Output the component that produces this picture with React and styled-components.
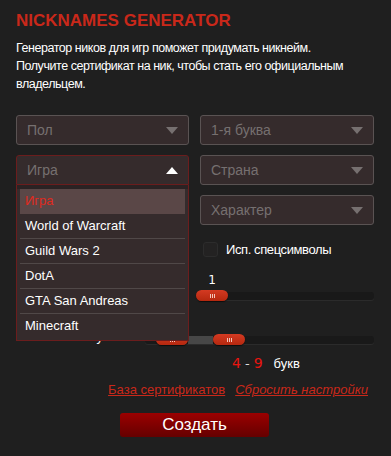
import React from "react";
import styled, { createGlobalStyle, css } from "styled-components";

const GlobalStyle = createGlobalStyle`
    html, body {
        margin: 0;
        padding: 0;
        background: #1f1f1f;
    }
    body {
        font-family: "Liberation Sans", Arial, sans-serif;
        color: #fff;
    }
`;

const Page = styled.div`
    width: 391px;
    height: 456px;
    box-sizing: border-box;
    padding: 11px 17px 0 16px;
    overflow: hidden;
    background: #1f1f1f;
`;
const Title = styled.h1`
    margin: 0;
    font-size: 17px;
    line-height: 20px;
    font-weight: 700;
    color: #c9281a;
`;
const Intro = styled.p`
    margin: 8px 0 0;
    font-size: 12.5px;
    letter-spacing: -0.45px;
    line-height: 18px;
    color: #fff;
`;
const Grid = styled.div`
    display: grid;
    grid-template-columns: 173px 174px;
    column-gap: 11px;
    row-gap: 10px;
    margin-top: 22px;
`;
const SelectWrap = styled.div`
    position: relative;
`;
const SelectBox = styled.div`
    height: 30px;
    box-sizing: border-box;
    display: flex;
    align-items: center;
    justify-content: space-between;
    padding: 0 10px;
    background: #352b2c;
    border: 1px solid ${(p) => (p.$open ? "#6b1d1d" : "#5a5353")};
    border-radius: ${(p) => (p.$open ? "3px 3px 0 0" : "3px")};
    font-size: 14px;
    color: #767070;
`;
const Arrow = styled.span`
    width: 0;
    height: 0;
    border-left: 6px solid transparent;
    border-right: 6px solid transparent;
    ${(p) =>
        p.$up
            ? css`
                  border-bottom: 7px solid #fff;
              `
            : css`
                  border-top: 7px solid #767070;
              `}
`;
const Menu = styled.ul`
    position: absolute;
    z-index: 5;
    left: 0;
    right: 0;
    top: 30px;
    margin: 0;
    padding: 4px 3px 2px;
    list-style: none;
    background: #352b2c;
    border: 1px solid #6b1d1d;
    border-top: none;
    box-shadow: inset 0 4px 0 #2b2223;
`;
const Item = styled.li`
    height: 24px;
    line-height: 24px;
    padding: 0 5px;
    font-size: 13px;
    color: ${(p) => (p.$active ? "#e02a1e" : "#fff")};
    background: ${(p) => (p.$active ? "#5a4747" : "transparent")};
    border-bottom: 1px solid ${(p) => (p.$active ? "transparent" : "#504848")};
    &:last-child {
        border-bottom: none;
    }
`;
const CheckRow = styled.label`
    display: flex;
    align-items: center;
    gap: 8px;
    font-size: 13px;
    letter-spacing: -0.4px;
    color: #fff;
    padding-left: 3px;
`;
const CheckBox = styled.span`
    width: 15px;
    height: 15px;
    box-sizing: border-box;
    border-radius: 3px;
    background: #232222;
    border: 1px solid #2c2c2c;
`;
const Options = styled.div`
    display: grid;
    grid-template-columns: 173px 174px;
    column-gap: 11px;
    margin-top: 17px;
`;
const SliderRow = styled.div`
    display: grid;
    grid-template-columns: ${(p) => p.$label}px 1fr;
    align-items: end;
    margin-top: ${(p) => p.$top}px;
`;
const SliderLabel = styled.span`
    font-size: 13px;
    letter-spacing: -0.3px;
    color: #fff;
    text-align: right;
    padding-right: 27px;
    line-height: 16px;
`;
const Slider = styled.div`
    position: relative;
    height: 11px;
`;
const Track = styled.div`
    position: absolute;
    left: 0;
    right: 0;
    top: 2px;
    height: 8px;
    background: #191919;
    border-radius: 3px;
    box-shadow: 0 1px 0 #2b2b2b;
`;
const Range = styled.div`
    position: absolute;
    top: 2px;
    height: 8px;
    background: #474747;
`;
const Handle = styled.div`
    position: absolute;
    top: 0;
    width: 32px;
    height: 11px;
    border-radius: 6px;
    background: linear-gradient(#d43a22, #b5280f);
    box-shadow: 0 1px 1px rgba(0, 0, 0, 0.6);
    display: flex;
    align-items: center;
    justify-content: center;
    gap: 1px;
    span {
        width: 1px;
        height: 4px;
        background: #f4c8bd;
    }
`;
const Value = styled.span`
    position: absolute;
    bottom: 14px;
    width: 32px;
    text-align: center;
    font-family: "DejaVu Sans", sans-serif;
    font-size: 12px;
    color: #fff;
`;
const Count = styled.div`
    display: flex;
    align-items: baseline;
    margin: 10px 0 0 216px;
    font-family: "DejaVu Sans", sans-serif;
    font-size: 13px;
    color: #ddd;
    b {
        font-weight: 400;
        color: #e8150f;
        font-size: 14px;
    }
    .dash {
        margin: 0 4px;
    }
    .unit {
        margin-left: 11px;
        font-family: "Liberation Sans", Arial, sans-serif;
        font-size: 13px;
        color: #fff;
    }
`;
const Links = styled.div`
    display: flex;
    justify-content: flex-end;
    gap: 10px;
    margin: 11px 6px 0 0;
    font-size: 13px;
`;
const LinkA = styled.a`
    color: #c9281a;
    text-decoration: underline;
    font-style: ${(p) => (p.$italic ? "italic" : "normal")};
`;
const Submit = styled.button`
    display: block;
    width: 149px;
    height: 24px;
    margin: 16px 0 0 104px;
    padding: 0;
    border: none;
    border-radius: 3px;
    background: linear-gradient(#9b0000, #650000);
    color: #fff;
    font-family: "Liberation Sans", Arial, sans-serif;
    font-size: 17px;
    line-height: 24px;
`;

const Select = ({ label }) => (
    <SelectBox>
        {label}
        <Arrow />
    </SelectBox>
);

const Grip = ({ left }) => (
    <Handle style={{ left }}>
        <span />
        <span />
        <span />
    </Handle>
);

const games = ["Игра", "World of Warcraft", "Guild Wars 2", "DotA", "GTA San Andreas", "Minecraft"];

const App = () => {
    return (
        <>
            <GlobalStyle />
            <Page>
                <Title>NICKNAMES GENERATOR</Title>
                <Intro>
                    Генератор ников для игр поможет придумать никнейм.
                    <br />
                    Получите сертификат на ник, чтобы стать его официальным владельцем.
                </Intro>
                <Grid>
                    <Select label="Пол" />
                    <Select label="1-я буква" />
                    <SelectWrap>
                        <SelectBox $open>
                            Игра
                            <Arrow $up />
                        </SelectBox>
                        <Menu>
                            {games.map((g, i) => (
                                <Item key={g} $active={i === 0}>
                                    {g}
                                </Item>
                            ))}
                        </Menu>
                    </SelectWrap>
                    <Select label="Страна" />
                    <div />
                    <Select label="Характер" />
                </Grid>
                <Options>
                    <div />
                    <CheckRow>
                        <CheckBox />
                        Исп. спецсимволы
                    </CheckRow>
                </Options>
                <SliderRow $label={180} $top={33}>
                    <span />
                    <Slider>
                        <Track />
                        <Value style={{ left: 0 }}>1</Value>
                        <Grip left={0} />
                    </Slider>
                </SliderRow>
                <SliderRow $label={129} $top={28}>
                    <SliderLabel>Кол-во букв:</SliderLabel>
                    <Slider>
                        <Track />
                        <Range style={{ left: 43, width: 25 }} />
                        <Grip left={11} />
                        <Grip left={68} />
                    </Slider>
                </SliderRow>
                <Count>
                    <b>4</b>
                    <span className="dash">-</span>
                    <b>9</b>
                    <span className="unit">букв</span>
                </Count>
                <Links>
                    <LinkA href="#">База сертификатов</LinkA>
                    <LinkA href="#" $italic>
                        Сбросить настройки
                    </LinkA>
                </Links>
                <Submit>Создать</Submit>
            </Page>
        </>
    );
};

export default App;
